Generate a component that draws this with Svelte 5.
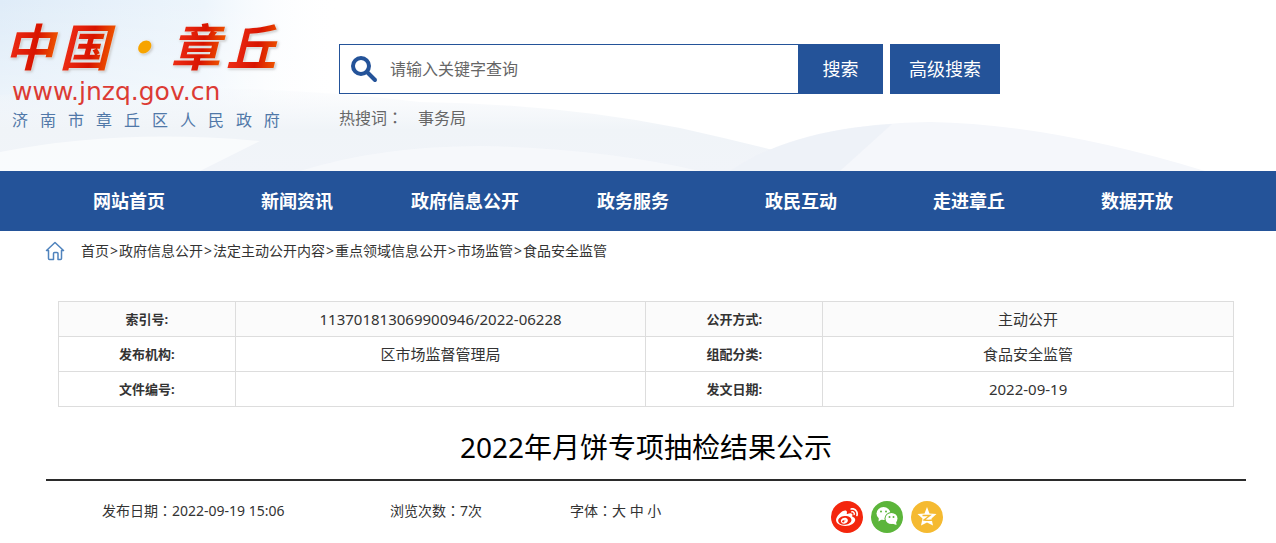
<script lang="ts">
	const logoChars = ['中', '国', '·', '章', '丘'];
	const siteName = '济南市章丘区人民政府';

	const navItems = [
		'网站首页',
		'新闻资讯',
		'政府信息公开',
		'政务服务',
		'政民互动',
		'走进章丘',
		'数据开放'
	];

	const crumbs = [
		'首页',
		'政府信息公开',
		'法定主动公开内容',
		'重点领域信息公开',
		'市场监管',
		'食品安全监管'
	];

	const rows = [
		['索引号:', '113701813069900946/2022-06228', '公开方式:', '主动公开'],
		['发布机构:', '区市场监督管理局', '组配分类:', '食品安全监管'],
		['文件编号:', '', '发文日期:', '2022-09-19']
	];

	let keyword = $state('');
</script>

<header class="header">
	<svg class="waves" viewBox="0 0 1276 171" preserveAspectRatio="none" aria-hidden="true">
		<defs>
			<linearGradient id="sky" x1="0" y1="0" x2="1" y2="0">
				<stop offset="0" stop-color="#dfecf8" />
				<stop offset="0.6" stop-color="#edf5fc" />
				<stop offset="1" stop-color="#fff" stop-opacity="0" />
			</linearGradient>
			<linearGradient id="mist" x1="0" y1="0" x2="0" y2="1">
				<stop offset="0" stop-color="#f3f6fa" stop-opacity="0.2" />
				<stop offset="0.5" stop-color="#f0f4f8" />
				<stop offset="1" stop-color="#f1f4f9" />
			</linearGradient>
			<linearGradient id="fade" x1="0" y1="0" x2="0" y2="1">
				<stop offset="0" stop-color="#fff" stop-opacity="0" />
				<stop offset="1" stop-color="#fff" stop-opacity="0.7" />
			</linearGradient>
		</defs>
		<rect width="340" height="171" fill="url(#sky)" />
		<rect width="340" height="171" fill="url(#fade)" />
		<path d="M0 95Q220 78 420 102Q560 104 680 128Q770 148 850 171H0Z" fill="url(#mist)" />
		<path d="M0 152Q120 128 260 141L200 171H0Z" fill="#fff" opacity="0.6" />
		<path d="M300 171Q380 146 480 146Q600 148 700 171Z" fill="#f8f9fc" opacity="0.7" />
		<path d="M730 171Q800 124 930 122Q1050 124 1205 171Z" fill="#f5f7fb" />
		<path d="M730 171Q790 130 892 124L840 171Z" fill="#ebeff6" opacity="0.7" />
	</svg>

	<a class="logo" href="/">
		<span class="brand">
			{#each logoChars as char}
				<span class:dot={char === '·'}>{char}</span>
			{/each}
		</span>
		<span class="domain">www.jnzq.gov.cn</span>
		<span class="site-name">
			{#each siteName as char}
				<span>{char}</span>
			{/each}
		</span>
	</a>

	<div class="search">
		<form class="search-form" onsubmit={(e) => e.preventDefault()}>
			<label class="search-box">
				<svg width="28" height="28" viewBox="0 0 28 28" fill="none" stroke="#245399" aria-hidden="true">
					<circle cx="11" cy="11" r="8" stroke-width="4" />
					<path d="M17 17l8 8" stroke-width="4" stroke-linecap="round" />
				</svg>
				<input type="text" aria-label="请输入关键字查询" placeholder="请输入关键字查询" bind:value={keyword} />
			</label>
			<button class="submit" type="submit">搜索</button>
			<button class="advanced" type="button">高级搜索</button>
		</form>
		<p class="hot"><span>热搜词<span class="colon">：</span></span><a href="#hot">事务局</a></p>
	</div>
</header>

<nav class="nav">
	{#each navItems as item}
		<a href="#nav">{item}</a>
	{/each}
</nav>

<main class="main">
	<div class="crumbs">
		<svg width="20" height="20" viewBox="0 0 20 20" fill="none" stroke="#4f83bd" stroke-width="1.5" stroke-linejoin="round" aria-hidden="true">
			<path d="M3.5 9.5H1.5L10 1.5L18.5 9.5H16.5V17.5Q16.5 18.5 15.5 18.5H13V12.5Q13 11.5 12 11.5H9.5Q8.5 11.5 8.5 12.5V18.5H4.5Q3.5 18.5 3.5 17.5Z" />
		</svg>
		<div>
			{#each crumbs as crumb, i}{#if i > 0}<span class="sep">&gt;</span>{/if}<a href="#crumb">{crumb}</a>{/each}
		</div>
	</div>

	<table class="info">
		<tbody>
			{#each rows as row}
				<tr>
					<th scope="row">{row[0]}</th>
					<td>{row[1]}</td>
					<th scope="row">{row[2]}</th>
					<td>{row[3]}</td>
				</tr>
			{/each}
		</tbody>
	</table>

	<h1>2022年月饼专项抽检结果公示</h1>

	<div class="meta">
		<span>发布日期<span class="colon">：</span>2022-09-19 15:06</span>
		<span>浏览次数<span class="colon">：</span>7次</span>
		<span>字体<span class="colon">：</span><button type="button">大</button> <button type="button">中</button> <button type="button">小</button></span>
		<div class="share">
			<a class="weibo" href="#weibo" aria-label="微博">
				<svg width="22" height="22" viewBox="0 0 24 24" fill="#fff" aria-hidden="true">
					<path d="M10.098 20.323c-3.977.391-7.414-1.406-7.672-4.02-.259-2.609 2.759-5.047 6.74-5.441 3.979-.394 7.413 1.404 7.671 4.018.259 2.6-2.759 5.049-6.737 5.439l-.002.004zM9.05 17.219c-.384.616-1.208.884-1.829.602-.612-.279-.793-.991-.406-1.593.379-.595 1.176-.861 1.793-.601.622.263.82.972.442 1.592zm1.27-1.627c-.141.237-.449.353-.689.253-.236-.09-.313-.361-.177-.586.138-.227.436-.346.672-.24.239.09.315.36.18.601l.014-.028zm.176-2.719c-1.893-.493-4.033.45-4.857 2.118-.836 1.704-.026 3.591 1.886 4.21 1.983.64 4.318-.341 5.132-2.179.8-1.793-.201-3.642-2.161-4.149zm7.563-1.224c-.346-.105-.57-.18-.405-.615.375-.977.42-1.804 0-2.404-.781-1.112-2.915-1.053-5.364-.03 0 0-.766.331-.571-.271.376-1.217.315-2.224-.27-2.809-1.338-1.337-4.869.045-7.888 3.08C1.309 10.87 0 13.273 0 15.348c0 3.981 5.099 6.395 10.086 6.395 6.536 0 10.888-3.801 10.888-6.82 0-1.822-1.547-2.854-2.915-3.284v.01zm1.908-5.092c-.766-.856-1.908-1.187-2.96-.962-.436.09-.706.511-.616.932.09.42.511.691.932.602.511-.105 1.067.044 1.442.465.376.421.466.977.316 1.473-.136.406.089.856.51.992.405.119.857-.105.992-.512.33-1.021.12-2.178-.646-3.035l.03.045zm2.418-2.195c-1.576-1.757-3.905-2.419-6.054-1.968-.496.104-.812.587-.706 1.081.104.496.586.813 1.082.707 1.532-.331 3.185.15 4.296 1.383 1.112 1.246 1.429 2.943.947 4.416-.165.48.106 1.007.586 1.157.479.165.991-.104 1.157-.586.675-2.088.241-4.478-1.338-6.235l.03.045z" />
				</svg>
			</a>
			<a class="wechat" href="#wechat" aria-label="微信">
				<svg width="32" height="32" viewBox="0 0 32 32" aria-hidden="true">
					<path d="M8 15l-.5 5.500 4.500-3z" fill="#fff" />
					<ellipse cx="12.500" cy="12.500" rx="7" ry="6.500" fill="#fff" />
					<circle cx="10" cy="10.500" r="1" fill="#5cb53b" />
					<circle cx="15" cy="10.500" r="1" fill="#5cb53b" />
					<ellipse cx="20.500" cy="17.500" rx="7" ry="6.500" fill="#5cb53b" />
					<ellipse cx="20.500" cy="17.500" rx="6" ry="5.500" fill="#fff" />
					<path d="M21 22.500l4.500 1.500-.5-4z" fill="#fff" />
					<circle cx="18.500" cy="16" r="1" fill="#5cb53b" />
					<circle cx="22.500" cy="16" r="1" fill="#5cb53b" />
				</svg>
			</a>
			<a class="qzone" href="#qzone" aria-label="QQ空间">
				<svg width="32" height="32" viewBox="0 0 32 32" aria-hidden="true">
					<path d="M16 6L18.500 12.500L25.500 13L20.500 17.500L22 24.500L16 21.500L10 24.500L11.500 17.500L6.500 13L13.500 12.500Z" fill="#fff" />
					<path d="M11.500 14.500H19L13 19Q17 19.800 22.500 19" fill="none" stroke="#f5ba31" stroke-width="1.3" />
				</svg>
			</a>
		</div>
	</div>
</main>

<style>
	:global(body) {
		background: #fff;
		color: #333;
		font-family: 'Noto Sans', 'Noto Sans CJK SC', sans-serif;
		font-size: 14px;
		line-height: 20px;
	}

	a {
		color: inherit;
		text-decoration: none;
	}

	button,
	input {
		margin: 0;
		padding: 0;
		border: 0;
		background: none;
		color: inherit;
		font: inherit;
	}

	button {
		cursor: pointer;
	}

	/* centred full-width colon */
	.colon {
		font-family: 'Noto Sans CJK TC', sans-serif;
		line-height: 0;
	}

	.header {
		position: relative;
		display: flex;
		padding-bottom: 39px;
	}

	.waves {
		position: absolute;
		inset: 0;
		width: 100%;
		height: 100%;
		z-index: -1;
	}

	.logo {
		flex: 0 0 268px;
		display: flex;
		flex-direction: column;
		margin: 12px 59px 0 12px;
	}

	.brand {
		display: flex;
		justify-content: space-between;
		margin: 0 0 0 -8px;
		font-family: 'Noto Sans CJK SC', sans-serif;
		font-size: 50px;
		font-weight: 700;
		font-style: italic;
		line-height: 64px;
		filter: drop-shadow(0 0 1px #fff) drop-shadow(1px 1px 1px #bbb);
	}
	.brand span {
		padding-right: 8px;
		margin-right: -4px;
		color: transparent;
		background: linear-gradient(100deg, #f03018 10%, #d81400 55%, #f56a00 95%);
		background-clip: text;
	}
	.brand .dot {
		background: #f7a400;
		background-clip: text;
	}

	.domain {
		color: #dc3b34;
		font-family: 'DejaVu Sans', sans-serif;
		font-size: 25px;
		line-height: 32px;
	}

	.site-name {
		display: flex;
		justify-content: space-between;
		color: #5078a8;
		font-size: 16px;
		line-height: 24px;
	}

	.search {
		flex: 0 1 661px;
		margin-top: 44px;
	}
	.search-form {
		display: flex;
		height: 50px;
	}
	.search-box {
		flex: 1;
		display: flex;
		align-items: center;
		gap: 12px;
		padding-left: 10px;
		border: 1px solid #245399;
		border-right: 0;
		background: #fff;
	}
	.search-box input {
		flex: 1;
		min-width: 0;
		outline: none;
		font-size: 16px;
	}
	.search-box input::placeholder {
		color: #666;
		opacity: 1;
	}
	.submit,
	.advanced {
		background: #245399;
		color: #fff;
		font-size: 18px;
	}
	.submit {
		width: 85px;
	}
	.advanced {
		width: 110px;
		margin-left: 7px;
	}
	.hot {
		display: flex;
		gap: 15px;
		margin: 14px 0 0;
		color: #666;
		font-size: 16px;
	}

	.nav {
		display: flex;
		padding: 0 55px 0 45px;
		background: #245399;
	}
	.nav a {
		flex: 1;
		color: #fff;
		font-size: 18px;
		font-weight: bold;
		line-height: 60px;
		text-align: center;
	}

	.main {
		padding: 0 30px 0 46px;
	}

	.crumbs {
		display: flex;
		align-items: center;
		gap: 16px;
		margin-top: 10px;
	}
	.crumbs svg {
		margin-left: -1px;
	}
	.sep {
		padding: 0 1px;
	}

	.info {
		width: calc(100% - 24px);
		margin: 40px 12px 0;
		border-collapse: collapse;
		table-layout: fixed;
		text-align: center;
	}
	.info th,
	.info td {
		height: 34px;
		padding: 0;
		border: 1px solid #ddd;
	}
	.info th {
		width: 15%;
		font-size: 13px;
	}
	.info td {
		width: 35%;
		font-size: 15px;
	}
	.info tr:first-child {
		background: #fbfbfb;
	}

	h1 {
		margin: 20px 0 0;
		padding-bottom: 12px;
		border-bottom: 2px solid #2b2b2b;
		color: #000;
		font-size: 28px;
		font-weight: normal;
		line-height: 40px;
		text-align: center;
	}

	.meta {
		display: grid;
		grid-template-columns: 288px 180px 261px auto;
		padding: 20px 0 10px 56px;
	}

	.share {
		display: flex;
		gap: 8px;
	}
	.share a {
		display: flex;
		align-items: center;
		justify-content: center;
		width: 32px;
		height: 32px;
		border-radius: 50%;
	}
	.weibo {
		background: #f4260d;
	}
	.wechat {
		background: #5cb53b;
	}
	.qzone {
		background: #f5ba31;
	}
</style>
